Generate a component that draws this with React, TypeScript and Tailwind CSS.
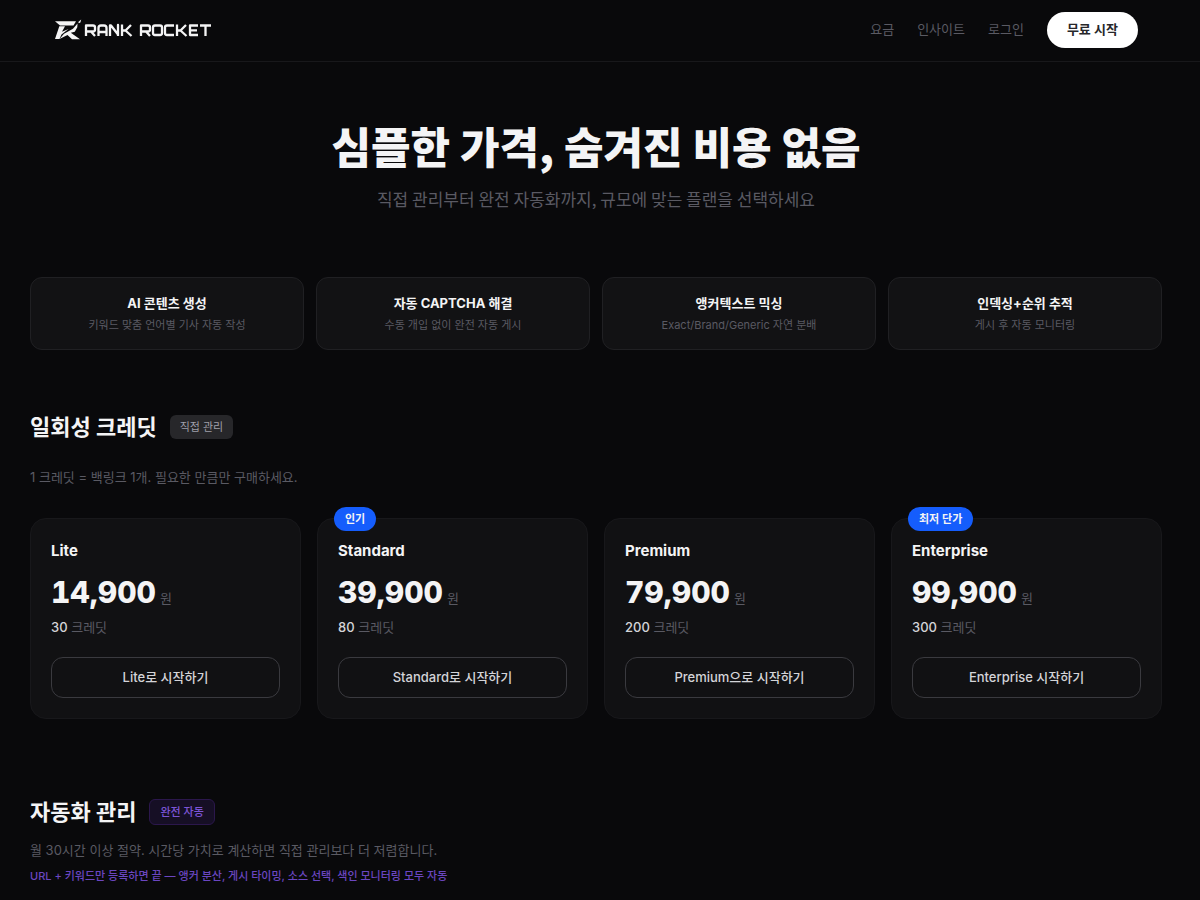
const features = [
  { title: 'AI 콘텐츠 생성', text: '키워드 맞춤 언어별 기사 자동 작성' },
  { title: '자동 CAPTCHA 해결', text: '수동 개입 없이 완전 자동 게시' },
  { title: '앵커텍스트 믹싱', text: 'Exact/Brand/Generic 자연 분배' },
  { title: '인덱싱+순위 추적', text: '게시 후 자동 모니터링' },
];

const plans = [
  { name: 'Lite', price: '14,900', credits: 30, action: 'Lite로 시작하기', badge: '' },
  { name: 'Standard', price: '39,900', credits: 80, action: 'Standard로 시작하기', badge: '인기' },
  { name: 'Premium', price: '79,900', credits: 200, action: 'Premium으로 시작하기', badge: '' },
  { name: 'Enterprise', price: '99,900', credits: 300, action: 'Enterprise 시작하기', badge: '최저 단가' },
];

function Logo() {
  return (
    <a href="#" aria-label="Rank Rocket" className="block">
      <svg width="158" height="22" viewBox="0 0 158 22" fill="none">
        <path d="M1 2.300H22L19.500 6.400H6Z" fill="#f4f4f5" />
        <path d="M5.300 7.200H11L8 12.800 14.500 10 7.500 15.500 5.500 20H1Z" fill="#f4f4f5" />
        <path d="M23.500 4.500 23.300 8.200 20.800 12.800 16.800 13.800 26 20.300H18L13.500 16 5.500 20 10 14.800 19 9.800Z" fill="#f4f4f5" />
        <path d="M24.300 3 27.200.600 26.400 3.400 24.800 4.200Z" fill="#f4f4f5" />
        <g stroke="#f4f4f5" strokeWidth="2.300" strokeLinejoin="round">
          <path d="M32 17V6.500H39Q41 6.500 41 8.500V10.500Q41 12.500 39 12.500H32M37 12.500 41 17" />
          <path d="M44.500 17V9Q44.500 6.500 47 6.500H50Q52.500 6.500 52.500 9V17M44.500 13H52.500" />
          <path d="M56 17V6.500H57L64 15.500V6V17" />
          <path d="M68 5.500V17M68 11.500H71.500L77 6M71.500 11.500 77.500 17" />
          <path d="M87 17V6.500H94Q96 6.500 96 8.500V10.500Q96 12.500 94 12.500H87M92 12.500 96 17" />
          <rect x="99" y="6.500" width="9" height="9.500" rx="2" />
          <path d="M120 6.500H113Q111 6.500 111 8.500V14Q111 16 113 16H120" />
          <path d="M123 5.500V17M123 11.500H126.500L132 6M126.500 11.500 132.500 17" />
          <path d="M144 6.500H136V16H144M136 11.300H143" />
          <path d="M146 6.500H157M151.500 6.500V17" />
        </g>
      </svg>
    </a>
  );
}

export default function App() {
  return (
    <div className="min-h-screen bg-[#09090b] pb-5 font-['Inter','Noto_Sans_CJK_KR',sans-serif] text-zinc-100">
      <header className="border-b border-[#18181b] pr-2">
        <div className="flex items-center justify-between px-[54px] pt-3 pb-[13px]">
          <Logo />
          <nav className="flex items-center gap-[23px] text-[13px] text-[#5a5a63]">
            <a href="#pricing">요금</a>
            <a href="#insights">인사이트</a>
            <a href="#login">로그인</a>
            <a href="#start" className="flex h-9 items-center rounded-full bg-white px-5 font-semibold text-zinc-800">
              무료 시작
            </a>
          </nav>
        </div>
      </header>

      <main className="pt-14 pr-[38px] pl-[30px]">
        <section className="text-center font-['Noto_Sans_CJK_KR',sans-serif]">
          <h1 className="text-[43px] leading-[54px] font-extrabold">심플한 가격, 숨겨진 비용 없음</h1>
          <p className="mt-[15px] text-[17px] leading-6 text-[#5a5a63]">직접 관리부터 완전 자동화까지, 규모에 맞는 플랜을 선택하세요</p>
        </section>

        <section className="mt-[66px] grid grid-cols-4 gap-3">
          {features.map((f) => (
            <div key={f.title} className="rounded-xl border border-[#202023] bg-[#121214] px-4 pt-[15px] pb-4 text-center">
              <h3 className="text-[13px] leading-5 font-bold">{f.title}</h3>
              <p className="mt-1 text-[11px] leading-4 text-[#5a5a63]">{f.text}</p>
            </div>
          ))}
        </section>

        <section className="mt-[61px]">
          <div className="flex items-center gap-[13px]">
            <h2 className="text-[22px] leading-8 font-bold">일회성 크레딧</h2>
            <span className="rounded-md bg-[#27272a] px-[10px] py-1 text-[11px] leading-4 text-zinc-400">직접 관리</span>
          </div>
          <p className="mt-6 text-[13px] leading-5 text-[#5a5a63]">1 크레딧 = 백링크 1개. 필요한 만큼만 구매하세요.</p>

          <div className="mt-[31px] grid grid-cols-4 gap-4">
            {plans.map((p) => (
              <article key={p.name} className="relative rounded-2xl border border-[#18181b] bg-[#111113] p-5">
                {p.badge && (
                  <span className="absolute -top-3 left-4 rounded-full bg-[#155dfc] px-[11px] py-1 text-[11px] leading-4 font-semibold">
                    {p.badge}
                  </span>
                )}
                <h3 className="text-[15px] leading-6 font-bold">{p.name}</h3>
                <p className="mt-[13px] flex items-baseline gap-1 leading-8">
                  <span className="text-[30px] font-extrabold tabular-nums">{p.price}</span>
                  <span className="text-[13px] text-[#5a5a63]">원</span>
                </p>
                <p className="mt-[3px] text-[13px] leading-5 text-[#5a5a63]">
                  <span className="font-medium text-zinc-300">{p.credits}</span> 크레딧
                </p>
                <button type="button" className="mt-5 h-[41px] w-full rounded-xl border border-[#3a3a3f] text-[13px] font-medium text-zinc-300">
                  {p.action}
                </button>
              </article>
            ))}
          </div>
        </section>

        <section className="mt-[77px]">
          <div className="flex items-center gap-[13px]">
            <h2 className="text-[22px] leading-8 font-bold">자동화 관리</h2>
            <span className="rounded-md border border-[#2b174c] bg-[#160f25] px-[10px] py-1 text-[11px] leading-4 font-medium text-[#7c54d6]">
              완전 자동
            </span>
          </div>
          <p className="mt-3 text-[13px] leading-5 text-[#5a5a63]">월 30시간 이상 절약. 시간당 가치로 계산하면 직접 관리보다 더 저렴합니다.</p>
          <p className="mt-2 text-[11px] leading-4 font-medium text-[#6b46c1]">
            URL + 키워드만 등록하면 끝 — 앵커 분산, 게시 타이밍, 소스 선택, 색인 모니터링 모두 자동
          </p>
        </section>
      </main>
    </div>
  );
}
